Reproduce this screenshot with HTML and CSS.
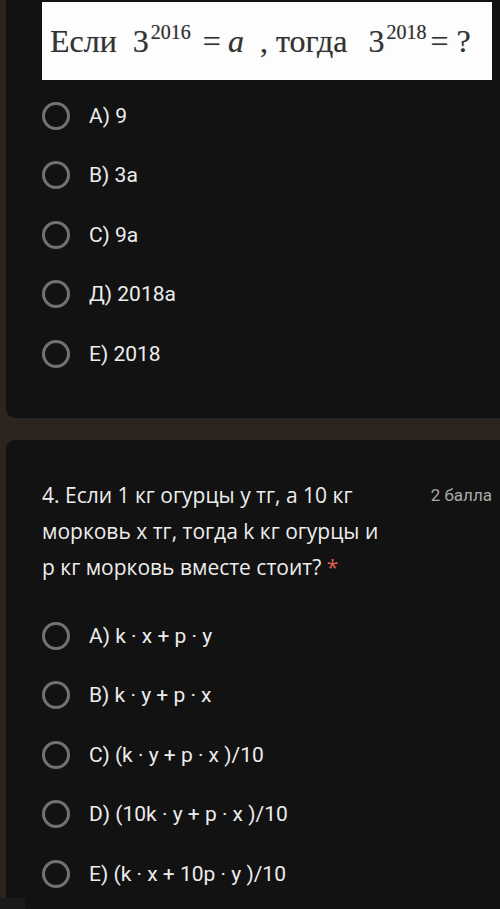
FILE: index.html
```html
<!DOCTYPE html>
<html lang="ru">
<head>
  <meta charset="UTF-8">
  <meta name="viewport" content="width=device-width, initial-scale=1.0">
  <title>Тест</title>
  <link rel="stylesheet" href="styles.css">
</head>
<body>
  <div class="page">
    <div class="card card-top">
      <div class="formula">
        <span class="word">Если</span>
        <span class="num">3<sup>2016</sup></span>
        <span class="eq">=</span>
        <span class="var">a</span>
        <span class="comma">,</span>
        <span class="word word-then">тогда</span>
        <span class="num num-second">3<sup>2018</sup></span>
        <span class="eq eq-second">=</span>
        <span class="q">?</span>
      </div>
      <div class="options">
        <div class="option"><span class="radio"></span><span class="label">A) 9</span></div>
        <div class="option"><span class="radio"></span><span class="label">B) 3a</span></div>
        <div class="option"><span class="radio"></span><span class="label">C) 9a</span></div>
        <div class="option"><span class="radio"></span><span class="label">Д) 2018a</span></div>
        <div class="option"><span class="radio"></span><span class="label">E) 2018</span></div>
      </div>
    </div>

    <div class="card card-bottom">
      <div class="question-head">
        <div class="question">4. Если 1 кг огурцы у тг, а 10 кг морковь x тг, тогда k кг огурцы и p кг морковь вместе стоит? <span class="required">*</span></div>
        <div class="points">2 балла</div>
      </div>
      <div class="options">
        <div class="option"><span class="radio"></span><span class="label">A) k · x + p · y</span></div>
        <div class="option"><span class="radio"></span><span class="label">B) k · y + p · x</span></div>
        <div class="option"><span class="radio"></span><span class="label">C) (k · y + p · x )/10</span></div>
        <div class="option"><span class="radio"></span><span class="label">D) (10k · y + p · x )/10</span></div>
        <div class="option"><span class="radio"></span><span class="label">E) (k · x + 10p · y )/10</span></div>
      </div>
    </div>
  </div>
  <div class="corner"></div>
</body>
</html>
```

FILE: styles.css
```css
body {
  margin: 0;
  background-color: #2b241f;
  font-family: Roboto, "Noto Sans", sans-serif;
  color: #e8eaed;
  height: 909px;
  overflow: hidden;
  position: relative;
}

.page {
  padding-left: 6px;
  display: flex;
  flex-direction: column;
  gap: 22px;
}

.card {
  background-color: #121212;
  padding-left: 36px;
}

.card-top {
  height: 418px;
  border-radius: 0 0 0 9px;
}

.card-bottom {
  border-radius: 9px 0 0 0;
  padding-top: 37px;
  height: 460px;
}

/* picture with the formula */
.formula {
  margin-top: 2px;
  width: 450px;
  height: 78px;
  background-color: #fdfdfd;
  display: flex;
  align-items: baseline;
  padding-left: 8px;
  box-sizing: border-box;
  font-family: "Liberation Serif", serif;
  font-size: 32px;
  line-height: 78px;
  color: #333333;
  text-shadow: 0 0 1px rgba(0, 0, 0, 0.35);
}

.formula .num {
  margin-left: 16px;
}

.formula .num-second {
  margin-left: 21px;
}

.formula sup {
  font-size: 20px;
  vertical-align: 13px;
  line-height: 0;
  margin-left: 2px;
}

.formula .eq {
  margin-left: 12px;
}

.formula .eq-second {
  margin-left: 4px;
}

.formula .var {
  margin-left: 7px;
  font-style: italic;
}

.formula .comma {
  margin-left: 16px;
}

.formula .word-then {
  margin-left: 8px;
}

.formula .q {
  margin-left: 8px;
}

.options {
  display: flex;
  flex-direction: column;
  margin-top: 6px;
}

.option {
  height: 59.5px;
  display: flex;
  align-items: center;
  gap: 19px;
}

.radio {
  width: 22px;
  height: 22px;
  border: 3px solid #727272;
  border-radius: 50%;
  flex-shrink: 0;
}

.label {
  font-size: 21px;
  color: #ececec;
}

.question-head {
  display: flex;
  justify-content: space-between;
  align-items: flex-start;
  padding-right: 8px;
}

.question {
  width: 348px;
  font-family: "Open Sans", sans-serif;
  font-size: 21px;
  line-height: 36px;
  color: #ededed;
}

.required {
  color: #e06055;
}

.points {
  font-size: 17px;
  line-height: 36px;
  color: #a8a8a8;
}

.card-bottom .options {
  margin-top: 21px;
}

.corner {
  position: absolute;
  left: 0;
  bottom: 0;
  width: 25px;
  height: 11px;
  background-color: #1b1b1b;
}
```
